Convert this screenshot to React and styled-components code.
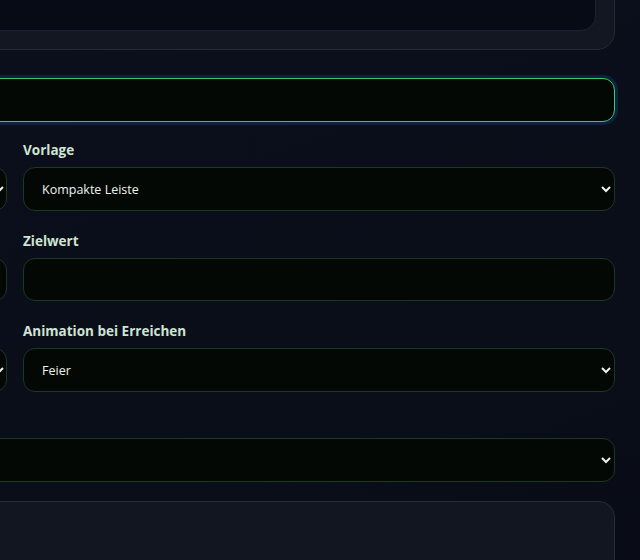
import React from "react";
import styled, { createGlobalStyle } from "styled-components";

const Global = createGlobalStyle`
  html, body { margin: 0; padding: 0; }
  body {
    background: linear-gradient(160deg, #0a0f1b 0%, #0a0e19 60%, #070a13 100%);
    min-height: 560px;
    overflow: hidden;
    font-family: "Open Sans", "Noto Sans", sans-serif;
    color-scheme: dark;
  }
`;

const Page = styled.div`
  width: 1200px;
  margin-left: -585px;
  margin-top: -40px;
  display: flex;
  flex-direction: column;
`;

const Card = styled.div`
  background: #131722;
  border: 1px solid #232935;
  border-radius: 18px;
  padding: 18px;
  height: ${(p) => p.$h}px;
  box-sizing: border-box;
`;

const InnerBox = styled.div`
  background: #070b15;
  border: 1px solid #1c2333;
  border-radius: 15px;
  height: 100%;
  box-sizing: border-box;
`;

const FocusInput = styled.input`
  margin-top: 28px;
  height: 44px;
  box-sizing: border-box;
  background: #040805;
  border: 1px solid #3dca66;
  border-radius: 12px;
  box-shadow: 0 0 0 3px #0f2140;
  outline: none;
  color: #e8ece9;
  font: inherit;
`;

const Grid = styled.div`
  margin-top: 20px;
  display: grid;
  grid-template-columns: 1fr 1fr;
  column-gap: 16px;
  row-gap: 22px;
`;

const Field = styled.div`
  display: flex;
  flex-direction: column;
  gap: 9px;
`;

const Label = styled.label`
  align-self: flex-start;
  font-size: 13.5px;
  font-weight: 700;
  line-height: 16px;
  color: #cfe4d3;
`;

const Select = styled.select`
  height: 44px;
  box-sizing: border-box;
  background-color: #040805;
  border: 1px solid #1a3924;
  border-radius: 12px;
  padding: 0 4px 0 14px;
  color: #eef2ef;
  font-family: inherit;
  font-size: 12.5px;
  outline: none;
`;

const TextInput = styled.input`
  height: 43px;
  box-sizing: border-box;
  background: #040805;
  border: 1px solid #1a3924;
  border-radius: 12px;
  padding: 0 18px;
  color: #e9eeea;
  font: inherit;
  font-size: 12.5px;
  outline: none;
`;

const Wide = styled(Field)`
  margin-top: 21px;
`;

const BottomCard = styled.div`
  margin-top: 19px;
  height: 200px;
  background: #121620;
  border: 1px solid #252b37;
  border-radius: 16px;
`;

export default function App() {
  return (
    <>
      <Global />
      <Page>
        <Card $h={90}>
          <InnerBox />
        </Card>
        <FocusInput type="text" defaultValue="" />
        <Grid>
          <Field>
            <Label>Stil</Label>
            <Select defaultValue="a">
              <option value="a">Standard</option>
            </Select>
          </Field>
          <Field>
            <Label>Vorlage</Label>
            <Select defaultValue="kompakt">
              <option value="kompakt">Kompakte Leiste</option>
              <option value="gross">Große Karte</option>
            </Select>
          </Field>
          <Field>
            <Label>Startwert</Label>
            <TextInput type="number" />
          </Field>
          <Field>
            <Label>Zielwert</Label>
            <TextInput type="number" />
          </Field>
          <Field>
            <Label>Einheit</Label>
            <Select defaultValue="e">
              <option value="e">Euro</option>
            </Select>
          </Field>
          <Field>
            <Label>Animation bei Erreichen</Label>
            <Select defaultValue="feier">
              <option value="feier">Feier</option>
              <option value="keine">Keine</option>
            </Select>
          </Field>
        </Grid>
        <Wide>
          <Label>Schriftart</Label>
          <Select defaultValue="">
            <option value=""></option>
          </Select>
        </Wide>
        <BottomCard />
      </Page>
    </>
  );
}
